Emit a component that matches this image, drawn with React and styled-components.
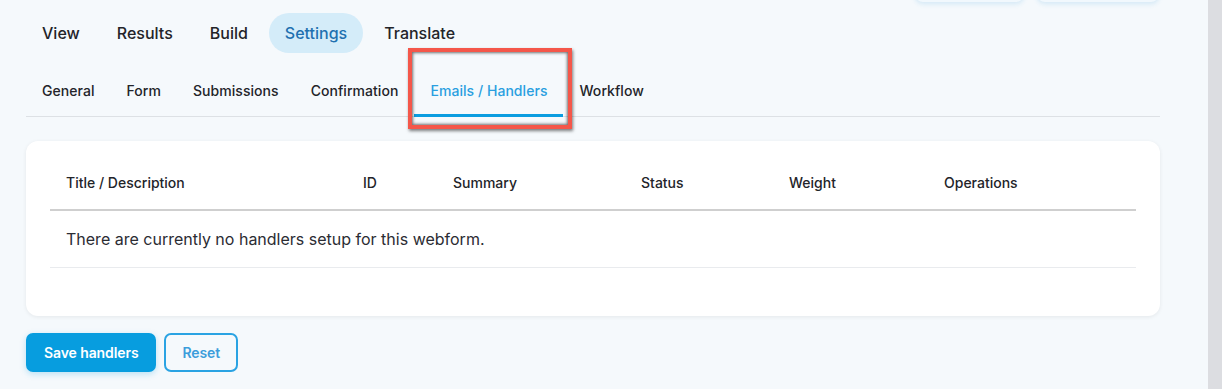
import React from "react";
import styled, { createGlobalStyle } from "styled-components";

const GlobalStyle = createGlobalStyle`
  html, body {
    margin: 0;
    padding: 0;
    background: #f5f9fc;
    font-family: Inter, "Noto Sans", Arial, sans-serif;
    color: #232429;
  }
  * { box-sizing: border-box; }
`;

const Page = styled.div`
  display: flex;
  height: 389px;
  overflow: hidden;
  background: #f5f9fc;
`;

const Main = styled.main`
  flex: 1;
  padding: 0 48px 0 26px;
  min-width: 0;
`;

const ScrollTrack = styled.div`
  width: 14px;
  flex: none;
  background: #dcdde1;
`;

const ActionsBar = styled.div`
  display: flex;
  justify-content: flex-end;
  gap: 13px;
  margin-top: -37px;
  padding-right: 1px;
`;

const GhostAction = styled.div`
  width: ${(p) => p.$w}px;
  height: 39px;
  border-radius: 8px;
  background: #f1f8fd;
  box-shadow: 0 2px 5px rgba(40, 150, 220, 0.16);
`;

const TopNav = styled.nav`
  display: flex;
  gap: 5px;
  margin-top: 11px;
`;

const TopTab = styled.a`
  display: block;
  padding: 10px 16px;
  line-height: 20px;
  font-size: 16px;
  font-weight: 500;
  border-radius: 20px;
  color: ${(p) => (p.$active ? "#1f70b0" : "#232429")};
  background: ${(p) => (p.$active ? "#d4ecf9" : "transparent")};
  text-decoration: none;
`;

const SubNav = styled.nav`
  display: flex;
  margin-top: 14px;
  border-bottom: 1px solid #dde1e5;
`;

const SubTab = styled.a`
  position: relative;
  display: block;
  padding: 14px 16px 13px;
  line-height: 20px;
  font-size: 14px;
  font-weight: 500;
  letter-spacing: 0.05px;
  margin-bottom: -1px;
  color: ${(p) => (p.$active ? "#2a9fe0" : "#232429")};
  border-bottom: 3px solid ${(p) => (p.$active ? "#0b9de0" : "transparent")};
  text-decoration: none;
`;

const Highlight = styled.span`
  position: absolute;
  left: -6px;
  right: -9px;
  top: -19px;
  bottom: -15px;
  border: 4px solid #f4574a;
  box-shadow: inset 0 0 3px 1px rgba(0, 0, 0, 0.55), 1px 2px 3px rgba(0, 0, 0, 0.5);
  pointer-events: none;
`;

const Card = styled.section`
  margin-top: 24px;
  background: #ffffff;
  border-radius: 12px;
  padding: 16px 24px 48px;
  box-shadow: 0 1px 4px rgba(0, 0, 0, 0.07);
`;

const Table = styled.table`
  width: 100%;
  border-collapse: collapse;
  table-layout: fixed;
`;

const Th = styled.th`
  width: ${(p) => (p.$w ? `${p.$w}px` : "auto")};
  text-align: left;
  padding: 16px;
  line-height: 20px;
  font-size: 14px;
  font-weight: 500;
  color: #232429;
  border-bottom: 2px solid #cfcfcf;
`;

const Td = styled.td`
  padding: 18px 16px;
  line-height: 20px;
  font-size: 16px;
  color: #2b2c33;
  border-bottom: 1px solid #e9ebee;
`;

const FormActions = styled.div`
  display: flex;
  gap: 8px;
  margin-top: 17px;
`;

const Button = styled.button`
  height: 39px;
  padding: 0 16px;
  border-radius: 7px;
  font-family: inherit;
  font-size: 14px;
  font-weight: 600;
  letter-spacing: -0.1px;
  cursor: pointer;
  border: 2px solid ${(p) => (p.$primary ? "#079ddf" : "#2aa3e3")};
  background: ${(p) => (p.$primary ? "#079ddf" : "transparent")};
  color: ${(p) => (p.$primary ? "#ffffff" : "#3c9ddb")};
  box-shadow: ${(p) => (p.$primary ? "0 2px 6px rgba(7, 157, 223, 0.25)" : "none")};
`;

const topTabs = ["View", "Results", "Build", "Settings", "Translate"];
const subTabs = ["General", "Form", "Submissions", "Confirmation", "Emails / Handlers", "Workflow"];
const columns = [
  { label: "Title / Description", w: 297 },
  { label: "ID", w: 90 },
  { label: "Summary", w: 188 },
  { label: "Status", w: 148 },
  { label: "Weight", w: 155 },
  { label: "Operations" },
];

export default function App() {
  return (
    <>
      <GlobalStyle />
      <Page>
        <Main>
          <ActionsBar>
            <GhostAction $w={109} />
            <GhostAction $w={122} />
          </ActionsBar>
          <TopNav>
            {topTabs.map((t) => (
              <TopTab key={t} $active={t === "Settings"}>
                {t}
              </TopTab>
            ))}
          </TopNav>
          <SubNav>
            {subTabs.map((t) => (
              <SubTab key={t} $active={t === "Emails / Handlers"}>
                {t}
                {t === "Emails / Handlers" && <Highlight />}
              </SubTab>
            ))}
          </SubNav>
          <Card>
            <Table>
              <thead>
                <tr>
                  {columns.map((c) => (
                    <Th key={c.label} $w={c.w}>
                      {c.label}
                    </Th>
                  ))}
                </tr>
              </thead>
              <tbody>
                <tr>
                  <Td colSpan={6}>There are currently no handlers setup for this webform.</Td>
                </tr>
              </tbody>
            </Table>
          </Card>
          <FormActions>
            <Button $primary>Save handlers</Button>
            <Button>Reset</Button>
          </FormActions>
        </Main>
        <ScrollTrack />
      </Page>
    </>
  );
}
